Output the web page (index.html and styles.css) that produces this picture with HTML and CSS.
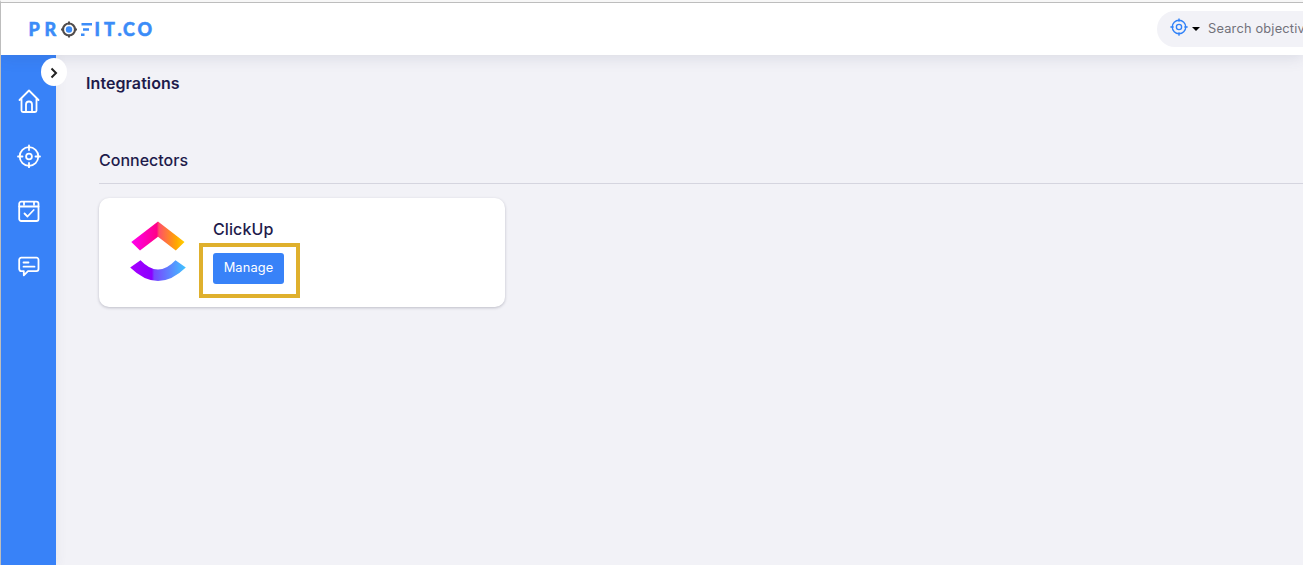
FILE: index.html
```html
<!DOCTYPE html>
<html lang="en">
<head>
  <meta charset="UTF-8" />
  <meta name="viewport" content="width=device-width, initial-scale=1.0" />
  <title>Integrations</title>
  <link rel="stylesheet" href="styles.css">
</head>
<body>
  <header class="header">
    <svg class="logo" width="130" height="20" viewBox="0 0 130 20">
      <text class="logo-text" x="0.500 16.500" y="13">PR</text>
      <circle cx="41" cy="6.500" r="6" fill="none" stroke="#504c4c" stroke-width="2.200" />
      <path d="M41 -1.500v3M41 11.500v3M33 6.500h3M46 6.500h3" stroke="#504c4c" stroke-width="2" />
      <circle cx="41" cy="6.500" r="3.200" fill="#3b8cf8" />
      <path d="M53.500 1.300H64M55 6.500H61M53 11.700H56.500" stroke="#3b8cf8" stroke-width="2.600" />
      <text class="logo-text" x="66.500 76 89.500 95 109.500" y="13">IT.CO</text>
    </svg>
    <div class="search">
      <svg class="search-icon" width="18" height="18" viewBox="0 0 24 24">
        <circle cx="12" cy="12" r="9" />
        <circle cx="12" cy="12" r="3.500" />
        <path d="M12 0.500V5M12 19v4.500M0.500 12H5M19 12h4.500" />
      </svg>
      <span class="caret"></span>
      <span class="search-text">Search objectives</span>
    </div>
  </header>

  <div class="layout">
    <nav class="sidebar">
      <button type="button" class="toggle">
        <svg width="8" height="12" viewBox="0 0 8 12">
          <path d="M1.500 1.500L6 6l-4.500 4.500" />
        </svg>
      </button>
      <a class="nav-item" href="#">
        <svg width="24" height="24" viewBox="0 0 24 24">
          <path d="M2.500 11L12 1.500l9.500 9.500M4.500 9.500V21.500a1.500 1.500 0 0 0 1.500 1.500h12a1.500 1.500 0 0 0 1.500-1.500V9.500M9 23v-7.500a3 3 0 0 1 6 0V23" />
        </svg>
      </a>
      <a class="nav-item" href="#">
        <svg width="24" height="24" viewBox="0 0 24 24">
          <circle cx="12" cy="12.500" r="9.300" />
          <circle cx="12" cy="12.500" r="2.900" />
          <path d="M12 1.500V6M12 19v4.500M1 12.500H5.500M18.500 12.500H23" />
        </svg>
      </a>
      <a class="nav-item" href="#">
        <svg width="24" height="24" viewBox="0 0 24 24">
          <rect x="2.200" y="2.700" width="19.300" height="19.300" rx="2" />
          <path d="M2.200 7.500h19.300M7 3v2.500M17 3v2.500M7.500 14.500l3 3 6.200-6.500" />
        </svg>
      </a>
      <a class="nav-item" href="#">
        <svg width="24" height="24" viewBox="0 0 24 24">
          <path d="M4.200 3.700h15.300a2 2 0 0 1 2 2v9.400a2 2 0 0 1-2 2H11l-4.200 4.200v-4.200H4.200a2 2 0 0 1-2-2V5.700a2 2 0 0 1 2-2zM6.500 8.500h5M6.500 12.700h11" />
        </svg>
      </a>
    </nav>

    <main class="content">
      <h1 class="page-title">Integrations</h1>
      <section class="connectors">
        <h2 class="section-title">Connectors</h2>
        <div class="card">
          <svg class="clickup-logo" width="58" height="62" viewBox="0 0 58 62">
            <defs>
              <linearGradient id="arrowFill" x1="0" x2="1" y1="0" y2="0">
                <stop offset="0" stop-color="#ff00f0" />
                <stop offset="0.480" stop-color="#ff0088" />
                <stop offset="0.520" stop-color="#ff5068" />
                <stop offset="0.850" stop-color="#ffa800" />
                <stop offset="1" stop-color="#ffd000" />
              </linearGradient>
              <linearGradient id="curveFill" x1="0" x2="1" y1="0" y2="0">
                <stop offset="0" stop-color="#a800ff" />
                <stop offset="0.390" stop-color="#8a00ff" />
                <stop offset="0.430" stop-color="#7846ff" />
                <stop offset="1" stop-color="#40c4ff" />
              </linearGradient>
            </defs>
            <path fill="url(#arrowFill)" d="M2.300 21L29 0.500 55.500 21l-8.700 8.500L29 15.800 11 29.500z" />
            <path fill="url(#curveFill)" d="M1.200 46.500L11.500 39.300Q29 57.800 46.500 39.300L56.800 46.500Q29 73.500 1.200 46.500z" />
          </svg>
          <div class="card-body">
            <h3 class="card-title">ClickUp</h3>
            <div class="highlight">
              <button type="button" class="button">Manage</button>
            </div>
          </div>
        </div>
      </section>
    </main>
  </div>
</body>
</html>
```

FILE: styles.css
```css
* {
  box-sizing: border-box;
}

body {
  font-family: Inter, "Liberation Sans", sans-serif;
  background: #f2f2f7;
  color: #1e1b4b;
  margin: 0;
  height: 100vh;
  border-top: 2px solid #f7f7f7;
  border-left: 1px solid #bdbdbd;
  display: flex;
  flex-direction: column;
  overflow: hidden;
}

.header {
  background: #fff;
  flex: 0 0 53px;
  border-top: 1px solid #bdbdbd;
  padding-left: 27px;
  display: flex;
  align-items: center;
  justify-content: space-between;
  box-shadow: 0 3px 14px rgba(60, 70, 110, 0.13);
  z-index: 1;
}

.logo {
  overflow: visible;
  margin-top: 7px;
}

.logo-text {
  font-family: Lato, sans-serif;
  font-size: 18px;
  font-weight: 900;
  fill: #3b8cf8;
  stroke: #3b8cf8;
  stroke-width: 0.500;
}

.search {
  background: #f2f2f7;
  width: 146px;
  height: 36px;
  border-radius: 18px 0 0 18px;
  padding-left: 13px;
  display: flex;
  align-items: center;
  overflow: hidden;
  white-space: nowrap;
}

.search-icon {
  flex: none;
  margin-bottom: 4px;
  fill: none;
  stroke: #3182f8;
  stroke-width: 1.800;
}

.caret {
  margin: 0 8px 0 4px;
  border: 4px solid transparent;
  border-top-color: #000;
  border-bottom: 0;
}

.search-text {
  color: #71717a;
  font-size: 12.800px;
  letter-spacing: 0.200px;
  margin-bottom: 1px;
}

.layout {
  flex: 1;
  display: flex;
}

.sidebar {
  background: #3882f8;
  position: relative;
  width: 55px;
  padding-top: 34px;
  display: flex;
  flex-direction: column;
  align-items: center;
  gap: 31px;
  box-shadow: 2px 0 10px rgba(60, 70, 110, 0.06);
}

.nav-item {
  height: 24px;
}

.nav-item svg {
  display: block;
  fill: none;
  stroke: #fff;
  stroke-width: 1.800;
  stroke-linecap: round;
  stroke-linejoin: round;
}

/* sits over the sidebar edge */
.toggle {
  position: absolute;
  top: 3px;
  right: -11px;
  width: 26px;
  height: 28px;
  border: none;
  border-radius: 50%;
  background: #fff;
  padding: 2px 0 0;
  display: flex;
  align-items: center;
  justify-content: center;
  z-index: 2;
}

.toggle svg {
  fill: none;
  stroke: #222;
  stroke-width: 2;
}

.content {
  flex: 1;
  padding: 18px 0 0 30px;
}

.page-title,
.section-title,
.card-title {
  margin: 0;
  font-size: 16px;
  line-height: 20px;
  font-weight: 600;
}

.page-title {
  letter-spacing: 0.080px;
}

.connectors {
  margin: 57px 0 0 13px;
}

.section-title {
  font-weight: 500;
  padding-bottom: 13px;
  border-bottom: 1px solid #d5d5df;
}

.card {
  background: #fff;
  width: 406px;
  height: 109px;
  margin-top: 14px;
  padding-left: 30px;
  border-radius: 10px;
  display: flex;
  box-shadow: 0 1px 3px rgba(30, 30, 60, 0.25);
}

.clickup-logo {
  margin-top: 23px;
}

.card-body {
  padding: 21px 0 0 12px;
}

.card-title {
  font-weight: 500;
  letter-spacing: 0.100px;
  padding-left: 14px;
}

.highlight {
  width: 101px;
  height: 55px;
  margin-top: 4px;
  border: 4px solid #dfb02d;
  padding: 6px 0 0 10px;
}

.button {
  display: block;
  width: 71px;
  height: 31px;
  border: none;
  border-radius: 3px;
  background: #3882f8;
  color: #fff;
  font-family: inherit;
  font-size: 12.800px;
  letter-spacing: 0.150px;
  padding: 0 0 2px;
  cursor: pointer;
}
```
